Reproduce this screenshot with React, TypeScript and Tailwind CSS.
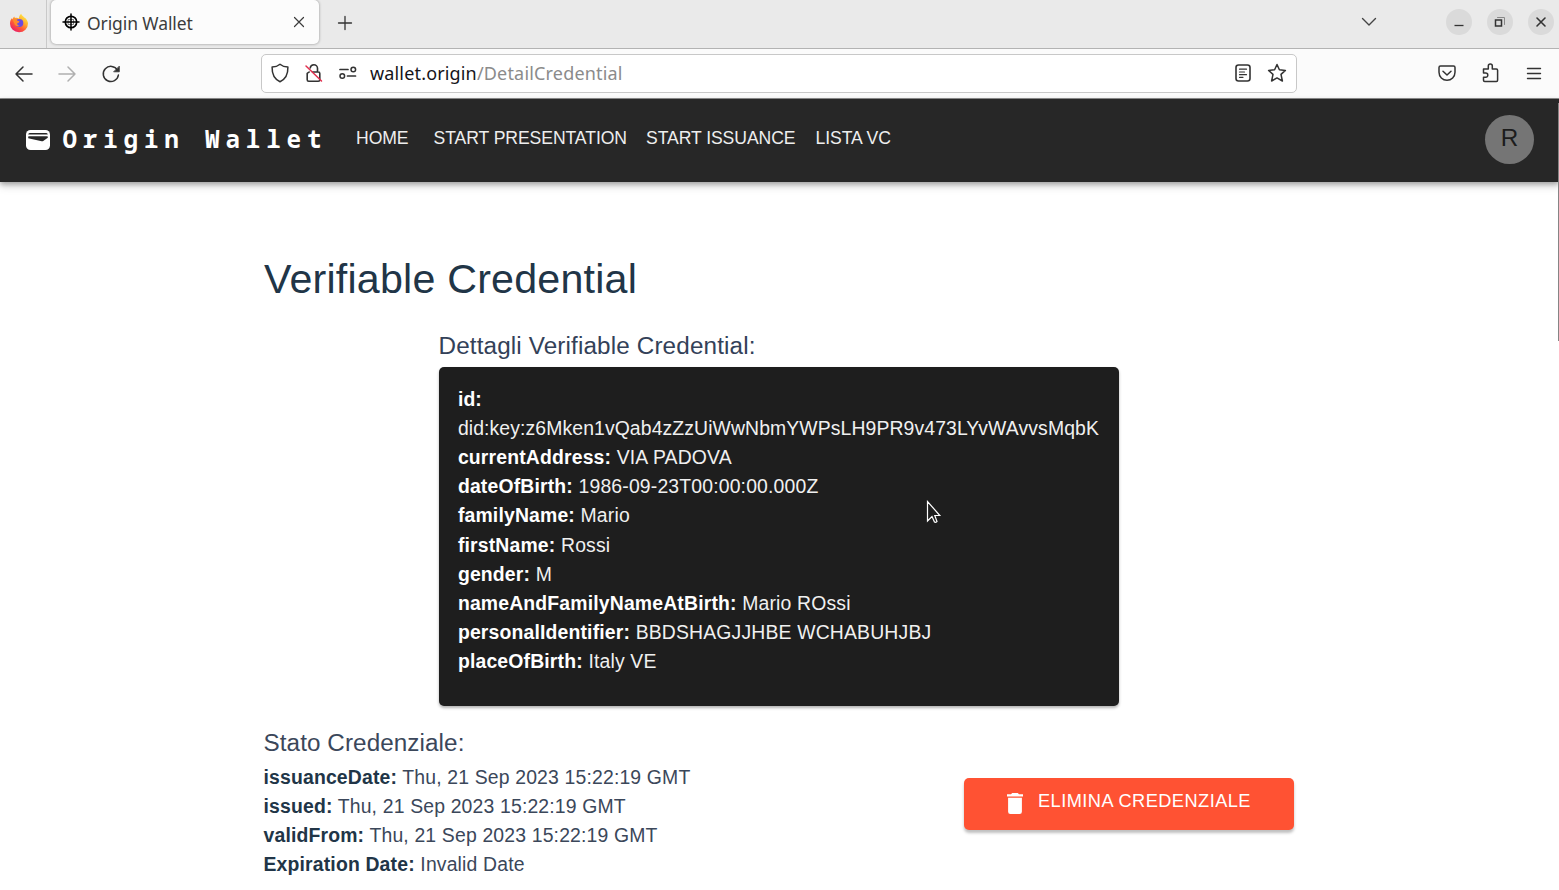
import React from "react";

const credential: [string, string][] = [
  ["currentAddress", "VIA PADOVA"],
  ["dateOfBirth", "1986-09-23T00:00:00.000Z"],
  ["familyName", "Mario"],
  ["firstName", "Rossi"],
  ["gender", "M"],
  ["nameAndFamilyNameAtBirth", "Mario ROssi"],
  ["personalIdentifier", "BBDSHAGJJHBE WCHABUHJBJ"],
  ["placeOfBirth", "Italy VE"],
];

const status: [string, string][] = [
  ["issuanceDate", "Thu, 21 Sep 2023 15:22:19 GMT"],
  ["issued", "Thu, 21 Sep 2023 15:22:19 GMT"],
  ["validFrom", "Thu, 21 Sep 2023 15:22:19 GMT"],
  ["Expiration Date", "Invalid Date"],
];

function Svg({ w, h, className = "", children }: { w: number; h: number; className?: string; children: React.ReactNode }) {
  return (
    <svg width={w} height={h} viewBox={`0 0 ${w} ${h}`} fill="none" stroke="currentColor" strokeWidth="1.5" strokeLinecap="round" strokeLinejoin="round" className={`shrink-0 ${className}`}>
      {children}
    </svg>
  );
}

function FirefoxLogo() {
  return (
    <svg width="20" height="20" viewBox="0 0 20 20" className="ml-[9px] shrink-0">
      <defs>
        <linearGradient id="flame" x1="0.85" y1="0.05" x2="0.2" y2="0.95">
          <stop offset="0" stopColor="#fff04a" />
          <stop offset="0.35" stopColor="#ffb02e" />
          <stop offset="0.65" stopColor="#ff5a36" />
          <stop offset="1" stopColor="#e8196b" />
        </linearGradient>
      </defs>
      <path d="M12.2.8c.5 1.700 1.900 2.600 3 3.600 1-.2 3.800 3.200 3.800 6.200a9 8.600 0 0 1-18 .2c0-2.300.7-4.300 2-5.700l.4 1.300C4 5 4.500 4 5.200 3.400l.7 1.700c1.600-.5 2.900-.2 4 .3.200-1.800.8-3.500 2.300-4.600z" fill="url(#flame)" />
      <circle cx="10.300" cy="10" r="4" fill="#6a4be0" />
      <path d="M3.500 6.500c1.800-1 4-.4 5 1.200 1 .2 1.900.4 1.900 1 0 .8-1.600 1-2.100 1.600-.3 1.300.6 2.400 2.300 2.400-2.600 1.400-5-.2-5.300-2.400z" fill="#ff8b2c" />
    </svg>
  );
}

function BrowserTabs() {
  return (
    <div className="flex h-[48px] items-start bg-[#eaeaea]">
      <div className="flex h-[48px] w-[47px] items-center border-r border-[#c9c9c9] pb-[2px]">
        <FirefoxLogo />
      </div>
      <div className="ml-[4px] flex h-[44px] w-[268px] items-center rounded-[5px] bg-[#fcfcfc] text-[#3c3c3c] shadow-[0_0_3px_rgba(0,0,0,0.4)]">
        <Svg w={18} h={18} className="ml-[11px] text-black">
          <circle cx="9" cy="9" r="5.700" strokeWidth="1.700" />
          <path d="M9 1v16M1 9h16" strokeWidth="1.500" />
          <path d="M6.500 6.500h5v5h-5z" strokeWidth="0.500" />
        </Svg>
        <span className="ml-[7px] w-[201px] pt-[2px] font-[Noto_Sans] text-[17.500px] tracking-[-0.100px]">Origin Wallet</span>
        <Svg w={12} h={12} className="ml-[5px]">
          <path d="M1.500 1.500l9 9M10.500 1.500l-9 9" strokeWidth="1.200" />
        </Svg>
      </div>
      <Svg w={16} h={16} className="ml-[18px] mt-[15px] text-[#333]">
        <path d="M8 1.500v13M1.500 8h13" strokeWidth="1.300" />
      </Svg>
      <Svg w={16} h={10} className="ml-auto mt-[17px] text-[#444]">
        <path d="M1.500 1.500L8 8l6.500-6.500" strokeWidth="1.400" />
      </Svg>
      <div className="ml-[69px] mr-[5px] mt-[9px] flex gap-[15px] text-[#333]">
        <div className="flex size-[26px] items-center justify-center rounded-full bg-[#dadada]">
          <Svg w={12} h={12}><path d="M1.500 9.500h9" strokeLinecap="butt" strokeWidth="1.300" /></Svg>
        </div>
        <div className="flex size-[26px] items-center justify-center rounded-full bg-[#dadada]">
          <Svg w={12} h={12}>
            <path d="M1.500 4h6v6h-6z" strokeLinejoin="miter" />
            <path d="M3.500 1.500h7v7" stroke="#888" strokeWidth="1" />
          </Svg>
        </div>
        <div className="flex size-[26px] items-center justify-center rounded-full bg-[#dadada]">
          <Svg w={12} h={12}><path d="M2 2l8 8M10 2l-8 8" strokeWidth="1.600" /></Svg>
        </div>
      </div>
    </div>
  );
}

function BrowserToolbar() {
  return (
    <div className="flex h-[51px] items-center border-b border-t border-b-[#8f8f8f] border-t-[#b3b3b3] bg-[#fbfbfb] text-[#333]">
      <Svg w={20} h={18} className="ml-[14px]"><path d="M18 9H2M9 2L2 9l7 7" /></Svg>
      <Svg w={20} h={18} className="ml-[23px] text-[#b0b0b0]"><path d="M2 9h16M11 2l7 7-7 7" /></Svg>
      <Svg w={20} h={20} className="ml-[24px]">
        <path d="M16.500 6.200A7.600 7.600 0 1 0 17.400 11" />
        <path d="M18.300 2.500v5.300h-5.300z" fill="currentColor" strokeWidth="0.800" />
      </Svg>
      <div className="ml-[140px] flex h-[39px] w-[1036px] items-center rounded-[5px] border border-[#c8c8c8] bg-white pb-px">
        <Svg w={20} h={20} className="ml-[8px]">
          <path d="M10 1.200c2 1.700 4.800 2.700 7.900 2.900.2 6.900-2 12-7.900 14.700C4.100 16.100 1.900 11 2.100 4.100 5.200 3.900 8 2.900 10 1.200z" />
        </Svg>
        <Svg w={20} h={20} className="ml-[14px]">
          <path d="M3.200 10.200v6.500q0 1.500 1.500 1.500h9.600q1.500 0 1.500-1.500V10.500q0-1.500-1.500-1.500H8.500M6.200 5C6.500 3 8 1.700 9.900 1.700S13.500 3.200 13.500 5.300v3.500M3.200 11.500q0-2 2-2.500" strokeWidth="1.600" />
          <path d="M2 3l15.500 15" stroke="#e2304f" />
        </Svg>
        <Svg w={20} h={14} className="ml-[14px]">
          <path d="M2 3.500h8M9.500 10h8" strokeWidth="1.700" />
          <circle cx="15.300" cy="3.500" r="2.300" />
          <circle cx="4.300" cy="10" r="2.300" />
        </Svg>
        <div className="ml-[12px] font-[Noto_Sans] text-[18px] leading-[24px] tracking-[0.160px] text-[#8b8b8b]">
          <span className="text-[#15141a]">wallet.origin</span><span className="tracking-[0.180px]">/DetailCredential</span>
        </div>
        <Svg w={16} h={18} className="ml-auto">
          <rect x="1" y="1" width="14" height="16" rx="2.500" strokeWidth="1.600" />
          <path d="M4.500 5.200h7M4.500 8h5M4.500 10.700h7M4.500 13.300h3.500" strokeWidth="1.200" />
        </Svg>
        <Svg w={20} h={20} className="ml-[16px] mr-[9px]">
          <path d="M10 1.500l2.400 5.300 6 .6-4.400 4 1.400 6.600L10 14.900 4.600 18 6 11.400l-4.400-4 6-.6z" strokeWidth="1.500" />
        </Svg>
      </div>
      <Svg w={18} h={18} className="mb-px ml-auto">
        <path d="M2.500 2h13q1.500 0 1.500 1.500V8.300a8 8 0 0 1-16 0V3.500Q1 2 2.500 2zM5 7.200l4 3.800 4-3.800" />
      </Svg>
      <Svg w={20} h={20} className="mb-px ml-[24px]">
        <path d="M3 6.500h4.800V3.400a2 2 0 0 1 4 0v3.100h4.100q1.200 0 1.200 1.200v10.100q0 1.200-1.200 1.200H4.200Q3 19 3 17.800v-3h2.200a2.100 2.100 0 0 0 0-4.200H3z" transform="translate(0.500 -0.500)" />
      </Svg>
      <Svg w={16} h={14} className="ml-[26px] mr-[17px]">
        <path d="M1.500 1.500h13M1.500 6.500h13M1.500 11.500h13" strokeWidth="1.400" />
      </Svg>
    </div>
  );
}

function AppHeader() {
  return (
    <header className="flex h-[83px] items-center bg-[#272727] text-white shadow-[0_2px_5px_rgba(0,0,0,0.3),0_5px_8px_rgba(0,0,0,0.13)]">
      <svg width="24" height="20" viewBox="0 0 24 20" className="mb-[2px] ml-[26px] shrink-0">
        <rect width="24" height="20" rx="4.500" fill="#fff" />
        <path d="M4 3h16q1.500 0 1.800 1.400H2.200Q2.500 3 4 3zM2.200 6.600q.5-.4 1.300-.4h17q.8 0 1.300.4v1.200l-4.600 3.200q-.7.500-1.500.3L2.200 8.200z" fill="#272727" />
      </svg>
      <span className="mb-[3px] ml-[12.500px] w-[293.500px] whitespace-pre font-[Noto_Sans_Mono,DejaVu_Sans_Mono,monospace] text-[24.250px] font-bold leading-[30px] tracking-[5.820px]">Origin Wallet</span>
      <nav className="flex pb-[4px] text-[17.600px] tracking-[-0.080px] text-[#eee]">
        <span className="w-[77.500px]">HOME</span>
        <span className="w-[212.500px]">START PRESENTATION</span>
        <span className="w-[169.500px]">START ISSUANCE</span>
        <span>LISTA VC</span>
      </nav>
      <div className="mb-[2px] ml-auto mr-[25px] flex size-[49px] items-center justify-center rounded-full bg-[#757575] pb-[2px] text-[24.250px] text-[#1c1c1c]">R</div>
    </header>
  );
}

function Field({ label, value }: { label: string; value: string }) {
  return (
    <p className="whitespace-nowrap leading-[29.100px] tracking-[0.160px]">
      <b>{label}:</b> {value}
    </p>
  );
}

export default function App() {
  return (
    <div className="relative h-[890px] w-[1559px] overflow-hidden bg-white font-[Liberation_Sans,sans-serif]">
      <BrowserTabs />
      <BrowserToolbar />
      <AppHeader />
      <main className="ml-[263.500px] w-[1030.500px] pt-[72px] text-[#213547]">
        <h1 className="pl-[0.500px] text-[41.200px] leading-[51px] tracking-[0.210px]">Verifiable Credential</h1>
        <section className="ml-[175px] mt-[22px] w-[680px]">
          <h2 className="h-[40.400px] text-[24.250px] leading-[38.800px] tracking-[0.140px] text-[#334158]">Dettagli Verifiable Credential:</h2>
          <div className="h-[339px] rounded-[5px] bg-[#1e1e1e] px-[19.400px] pt-[17.700px] text-[19.400px] text-[#f0f0f0] shadow-[0_2px_3px_rgba(0,0,0,0.3)] [&_b]:text-white">
            <p className="whitespace-nowrap leading-[29.100px] tracking-[0.100px]"><b>id:</b><br />did:key:z6Mken1vQab4zZzUiWwNbmYWPsLH9PR9v473LYvWAvvsMqbK</p>
            {credential.map(([label, value]) => <Field key={label} label={label} value={value} />)}
          </div>
        </section>
        <div className="mt-[17.600px] flex justify-between">
          <section className="text-[19.400px] text-[#3b475a] [&_b]:text-[#213547]">
            <h2 className="text-[24.250px] leading-[38.800px] tracking-[0.080px]">Stato Credenziale:</h2>
            {status.map(([label, value]) => <Field key={label} label={label} value={value} />)}
          </section>
          <button className="mt-[54px] flex h-[52px] w-[330px] items-center rounded-[5px] bg-[#ff5233] text-[18.200px] tracking-[0.460px] text-white shadow-[0_3px_3px_rgba(0,0,0,0.25)]">
            <svg width="16" height="21" viewBox="0 0 16 21" fill="#fff" className="mb-px ml-[43px] shrink-0">
              <path d="M0 1.200h4L5.200 0h5.600L12 1.200h4v2.400H0zM1.100 4.800h13.800v13.900q0 2.300-2.300 2.300H3.400q-2.300 0-2.300-2.300z" />
            </svg>
            <span className="ml-[15px] pb-[5px]">ELIMINA CREDENZIALE</span>
          </button>
        </div>
      </main>
      <div className="absolute right-0 top-[103px] h-[238px] w-px bg-[#858585]" />
      <svg width="16" height="25" viewBox="0 0 16 25" className="absolute left-[926px] top-[500px]">
        <path d="M1.500 1.500v19.500l4.500-4.500 2.500 5.500q1 .8 2.500-.5L8.800 15.500h5z" fill="#1e1e1e" stroke="#fff" strokeWidth="1.200" />
      </svg>
    </div>
  );
}
